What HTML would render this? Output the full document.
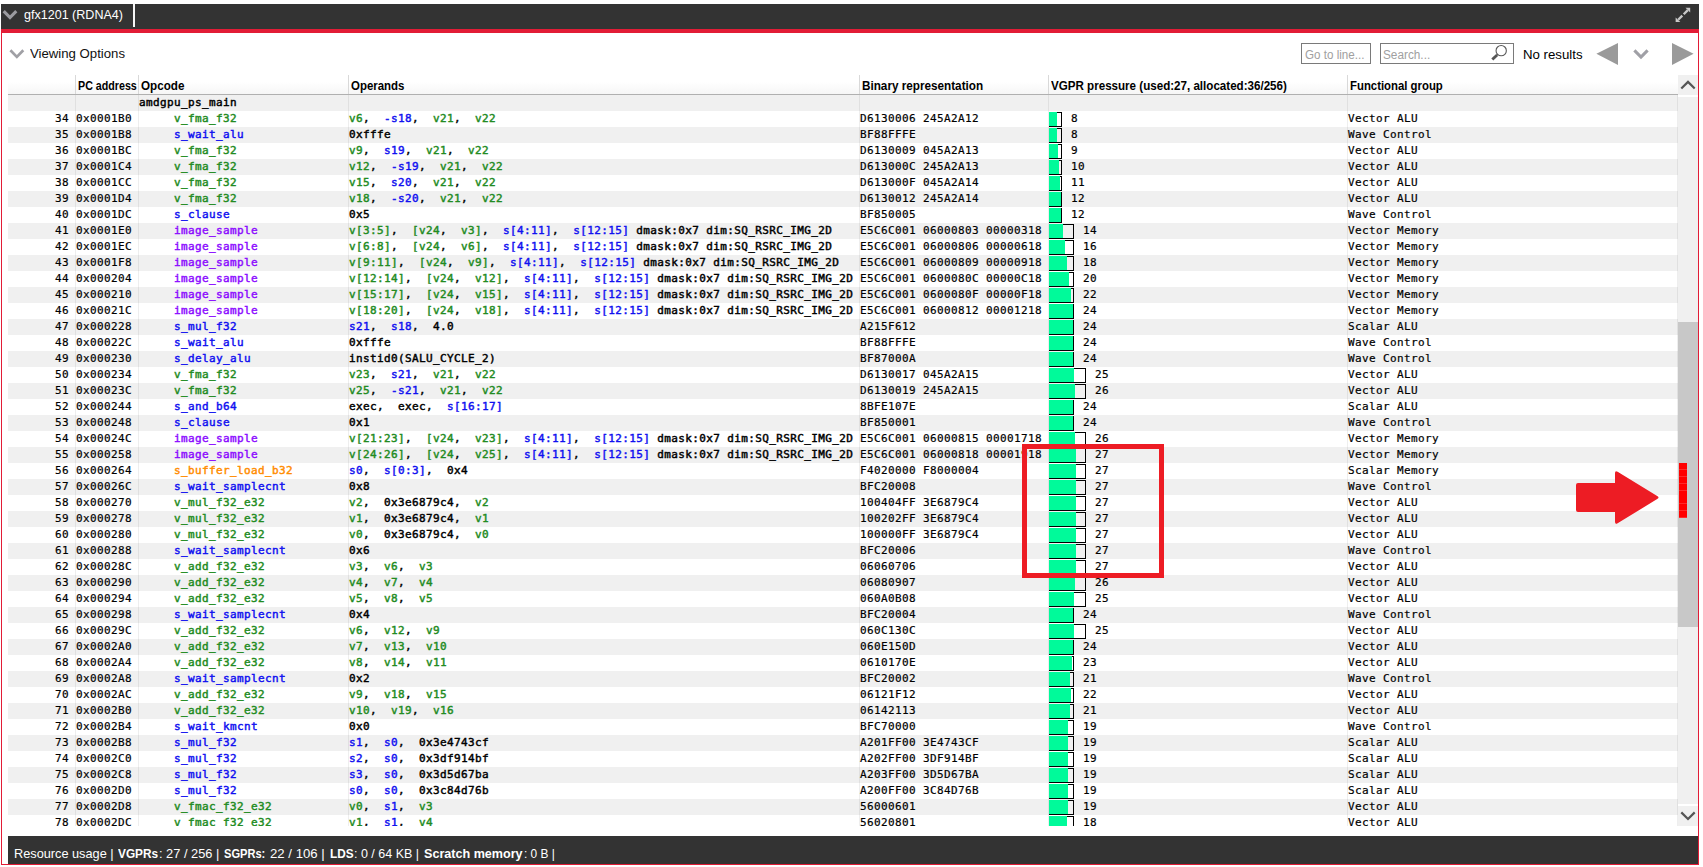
<!DOCTYPE html>
<html lang="en"><head><meta charset="utf-8"><title>gfx1201 (RDNA4) ISA view</title>
<style>
*{box-sizing:border-box}
html,body{margin:0;padding:0;background:#fff}
body{width:1703px;height:867px;position:relative;overflow:hidden;font-family:"Liberation Sans",sans-serif;color:#000}
.abs{position:absolute}
.ft{display:inline-block;height:18px;line-height:18px;white-space:pre;transform-origin:0 50%}
#frame{left:1px;top:4px;width:1698px;height:861px;border:1px solid #e21c36;border-top:none}
#title{left:1px;top:4px;width:1698px;height:25px;background:#333}
#stripe{left:1px;top:29px;width:1698px;height:4px;background:#e21c36}
#tabsep{left:133px;top:4px;width:2px;height:22.5px;background:#f6f6f6}
.inp{border:1px solid #7a7a7a;background:#fff;height:21px;top:43px}
#gotobox{left:1301px;width:70px}
#searchbox{left:1380px;width:134px}
#table{left:8px;top:75px;width:1670px;height:751px;overflow:hidden}
#hdr{left:0;top:0;width:1671px;height:20px;background:linear-gradient(#fff 0%,#fff 35%,#f6f6f6 100%);border-bottom:1px solid #b0b0b0}
.hs{top:0;width:1px;height:19px;background:#d9d9d9}
.r{left:0;width:1670px;height:16px;font-family:"DejaVu Sans Mono","Liberation Mono",monospace;font-size:11px;letter-spacing:0.3775px;line-height:16px;white-space:pre;-webkit-text-stroke-width:0.2px}
.r.a{background:#f0f0f0}
.c{position:absolute;top:0;height:16px;white-space:pre}
.bd{-webkit-text-stroke-width:0.45px}
.g{color:#228b22}
.b{color:#1010f0}
.m{color:#8c0cff}
.o{color:#ff8c00}
.vl{top:20px;width:1px;height:751px;background:rgba(0,0,0,0.065)}
.bar{position:absolute;left:1041px;top:1px;height:15px;border:1px solid #000}
.fill{position:absolute;left:1041px;top:1px;height:14px;background:#00fa9a}
#sb{left:1678px;top:75px;width:20px;height:751px;background:#fff}
</style></head>
<body>
<div class="abs" id="frame"></div>
<div class="abs" id="title"></div>
<div class="abs" id="stripe"></div>
<svg class="abs" style="left:0;top:4px" width="22" height="22" viewBox="0 0 22 22"><path d="M3.7 7.2 L10 13.6 L16.3 7.2" fill="none" stroke="#9b9ba0" stroke-width="3.1"/></svg>
<span class="abs ft" id="tabtxt" style="left:23.80px;top:5.50px;font-size:13px;font-weight:normal;color:#fff;transform:scaleX(0.9648)">gfx1201 (RDNA4)</span>
<div class="abs" id="tabsep"></div>
<svg class="abs" style="left:1674px;top:6px" width="18" height="18" viewBox="0 0 18 18"><path d="M4.2 13.7 L8.3 9.6 M9.7 8.2 L13.8 4.1" fill="none" stroke="#c8c8c8" stroke-width="2.3"/><path d="M11.5 1.85 L16.2 1.85 L16.2 6.55 Z M1.65 11.4 L1.65 16.1 L6.35 16.1 Z" fill="#c8c8c8"/></svg>
<svg class="abs" style="left:6px;top:44px" width="22" height="20" viewBox="0 0 22 20"><path d="M4.4 6.3 L10.85 12.9 L17.3 6.3" fill="none" stroke="#a0a0a5" stroke-width="2.7"/></svg>
<span class="abs ft" id="vo" style="left:30.00px;top:44.50px;font-size:13px;font-weight:normal;color:#111;transform:scaleX(1.0137)">Viewing Options</span>
<div class="abs inp" id="gotobox"></div>
<div class="abs inp" id="searchbox"></div>
<span class="abs ft" id="goto" style="left:1304.60px;top:46.04px;font-size:12px;font-weight:normal;color:#a0a0a0;transform:scaleX(0.9678)">Go to line...</span>
<span class="abs ft" id="search" style="left:1383.40px;top:46.04px;font-size:12px;font-weight:normal;color:#a0a0a0;transform:scaleX(0.9827)">Search...</span>
<svg class="abs" style="left:1488px;top:43px" width="24" height="21" viewBox="0 0 24 21"><circle cx="13.2" cy="7.65" r="5.15" fill="none" stroke="#5a5a5a" stroke-width="1.1"/><path d="M9.7 11.2 L8.6 12.4" stroke="#5a5a5a" stroke-width="1.2"/><path d="M9.1 12 L4.3 16.5" stroke="#555" stroke-width="2.9"/></svg>
<span class="abs ft" id="nores" style="left:1523.20px;top:46.10px;font-size:13px;font-weight:normal;color:#000;transform:scaleX(1.0183)">No results</span>
<svg class="abs" style="left:1594px;top:42px" width="104" height="24" viewBox="0 0 104 24"><path d="M2.4 11.7 L24 1 L24 23 Z" fill="#9a9a9a"/><path d="M78 1 L78 23 L99.6 11.7 Z" fill="#9a9a9a"/><path d="M40.4 8.4 L47 15 L53.6 8.4" fill="none" stroke="#a0a0a6" stroke-width="3.1"/></svg>
<div class="abs" id="table">
<div class="abs" id="hdr"></div>
<div class="abs hs" style="left:67px"></div><div class="abs hs" style="left:130px"></div><div class="abs hs" style="left:340px"></div><div class="abs hs" style="left:851px"></div><div class="abs hs" style="left:1040px"></div><div class="abs hs" style="left:1339px"></div>
<div class="abs r a" style="top:20px"><span class="c bd" style="left:131px">amdgpu_ps_main</span></div>
<div class="abs r" style="top:36px"><span class="c" style="right:1609px">34</span><span class="c" style="left:68px">0x0001B0</span><span class="c bd g" style="left:166px">v_fma_f32</span><span class="c bd" style="left:341px"><span class="g">v6</span>,  <span class="b">-s18</span>,  <span class="g">v21</span>,  <span class="g">v22</span></span><span class="c" style="left:852px">D6130006 245A2A12</span><i class="bar" style="width:13px"></i><i class="fill" style="width:8px"></i><span class="c" style="left:1063px">8</span><span class="c" style="left:1340px">Vector ALU</span></div>
<div class="abs r a" style="top:52px"><span class="c" style="right:1609px">35</span><span class="c" style="left:68px">0x0001B8</span><span class="c bd b" style="left:166px">s_wait_alu</span><span class="c bd" style="left:341px">0xfffe</span><span class="c" style="left:852px">BF88FFFE</span><i class="bar" style="width:13px"></i><i class="fill" style="width:8px"></i><span class="c" style="left:1063px">8</span><span class="c" style="left:1340px">Wave Control</span></div>
<div class="abs r" style="top:68px"><span class="c" style="right:1609px">36</span><span class="c" style="left:68px">0x0001BC</span><span class="c bd g" style="left:166px">v_fma_f32</span><span class="c bd" style="left:341px"><span class="g">v9</span>,  <span class="b">s19</span>,  <span class="g">v21</span>,  <span class="g">v22</span></span><span class="c" style="left:852px">D6130009 045A2A13</span><i class="bar" style="width:13px"></i><i class="fill" style="width:9px"></i><span class="c" style="left:1063px">9</span><span class="c" style="left:1340px">Vector ALU</span></div>
<div class="abs r a" style="top:84px"><span class="c" style="right:1609px">37</span><span class="c" style="left:68px">0x0001C4</span><span class="c bd g" style="left:166px">v_fma_f32</span><span class="c bd" style="left:341px"><span class="g">v12</span>,  <span class="b">-s19</span>,  <span class="g">v21</span>,  <span class="g">v22</span></span><span class="c" style="left:852px">D613000C 245A2A13</span><i class="bar" style="width:13px"></i><i class="fill" style="width:10px"></i><span class="c" style="left:1063px">10</span><span class="c" style="left:1340px">Vector ALU</span></div>
<div class="abs r" style="top:100px"><span class="c" style="right:1609px">38</span><span class="c" style="left:68px">0x0001CC</span><span class="c bd g" style="left:166px">v_fma_f32</span><span class="c bd" style="left:341px"><span class="g">v15</span>,  <span class="b">s20</span>,  <span class="g">v21</span>,  <span class="g">v22</span></span><span class="c" style="left:852px">D613000F 045A2A14</span><i class="bar" style="width:13px"></i><i class="fill" style="width:11px"></i><span class="c" style="left:1063px">11</span><span class="c" style="left:1340px">Vector ALU</span></div>
<div class="abs r a" style="top:116px"><span class="c" style="right:1609px">39</span><span class="c" style="left:68px">0x0001D4</span><span class="c bd g" style="left:166px">v_fma_f32</span><span class="c bd" style="left:341px"><span class="g">v18</span>,  <span class="b">-s20</span>,  <span class="g">v21</span>,  <span class="g">v22</span></span><span class="c" style="left:852px">D6130012 245A2A14</span><i class="bar" style="width:13px"></i><i class="fill" style="width:12px"></i><span class="c" style="left:1063px">12</span><span class="c" style="left:1340px">Vector ALU</span></div>
<div class="abs r" style="top:132px"><span class="c" style="right:1609px">40</span><span class="c" style="left:68px">0x0001DC</span><span class="c bd b" style="left:166px">s_clause</span><span class="c bd" style="left:341px">0x5</span><span class="c" style="left:852px">BF850005</span><i class="bar" style="width:13px"></i><i class="fill" style="width:12px"></i><span class="c" style="left:1063px">12</span><span class="c" style="left:1340px">Wave Control</span></div>
<div class="abs r a" style="top:148px"><span class="c" style="right:1609px">41</span><span class="c" style="left:68px">0x0001E0</span><span class="c bd m" style="left:166px">image_sample</span><span class="c bd" style="left:341px"><span class="g">v[3:5]</span>,  <span class="g">[v24</span>,  <span class="g">v3]</span>,  <span class="b">s[4:11]</span>,  <span class="b">s[12:15]</span> dmask:0x7 dim:SQ_RSRC_IMG_2D</span><span class="c" style="left:852px">E5C6C001 06000803 00000318</span><i class="bar" style="width:25px"></i><i class="fill" style="width:14px"></i><span class="c" style="left:1075px">14</span><span class="c" style="left:1340px">Vector Memory</span></div>
<div class="abs r" style="top:164px"><span class="c" style="right:1609px">42</span><span class="c" style="left:68px">0x0001EC</span><span class="c bd m" style="left:166px">image_sample</span><span class="c bd" style="left:341px"><span class="g">v[6:8]</span>,  <span class="g">[v24</span>,  <span class="g">v6]</span>,  <span class="b">s[4:11]</span>,  <span class="b">s[12:15]</span> dmask:0x7 dim:SQ_RSRC_IMG_2D</span><span class="c" style="left:852px">E5C6C001 06000806 00000618</span><i class="bar" style="width:25px"></i><i class="fill" style="width:16px"></i><span class="c" style="left:1075px">16</span><span class="c" style="left:1340px">Vector Memory</span></div>
<div class="abs r a" style="top:180px"><span class="c" style="right:1609px">43</span><span class="c" style="left:68px">0x0001F8</span><span class="c bd m" style="left:166px">image_sample</span><span class="c bd" style="left:341px"><span class="g">v[9:11]</span>,  <span class="g">[v24</span>,  <span class="g">v9]</span>,  <span class="b">s[4:11]</span>,  <span class="b">s[12:15]</span> dmask:0x7 dim:SQ_RSRC_IMG_2D</span><span class="c" style="left:852px">E5C6C001 06000809 00000918</span><i class="bar" style="width:25px"></i><i class="fill" style="width:18px"></i><span class="c" style="left:1075px">18</span><span class="c" style="left:1340px">Vector Memory</span></div>
<div class="abs r" style="top:196px"><span class="c" style="right:1609px">44</span><span class="c" style="left:68px">0x000204</span><span class="c bd m" style="left:166px">image_sample</span><span class="c bd" style="left:341px"><span class="g">v[12:14]</span>,  <span class="g">[v24</span>,  <span class="g">v12]</span>,  <span class="b">s[4:11]</span>,  <span class="b">s[12:15]</span> dmask:0x7 dim:SQ_RSRC_IMG_2D</span><span class="c" style="left:852px">E5C6C001 0600080C 00000C18</span><i class="bar" style="width:25px"></i><i class="fill" style="width:20px"></i><span class="c" style="left:1075px">20</span><span class="c" style="left:1340px">Vector Memory</span></div>
<div class="abs r a" style="top:212px"><span class="c" style="right:1609px">45</span><span class="c" style="left:68px">0x000210</span><span class="c bd m" style="left:166px">image_sample</span><span class="c bd" style="left:341px"><span class="g">v[15:17]</span>,  <span class="g">[v24</span>,  <span class="g">v15]</span>,  <span class="b">s[4:11]</span>,  <span class="b">s[12:15]</span> dmask:0x7 dim:SQ_RSRC_IMG_2D</span><span class="c" style="left:852px">E5C6C001 0600080F 00000F18</span><i class="bar" style="width:25px"></i><i class="fill" style="width:22px"></i><span class="c" style="left:1075px">22</span><span class="c" style="left:1340px">Vector Memory</span></div>
<div class="abs r" style="top:228px"><span class="c" style="right:1609px">46</span><span class="c" style="left:68px">0x00021C</span><span class="c bd m" style="left:166px">image_sample</span><span class="c bd" style="left:341px"><span class="g">v[18:20]</span>,  <span class="g">[v24</span>,  <span class="g">v18]</span>,  <span class="b">s[4:11]</span>,  <span class="b">s[12:15]</span> dmask:0x7 dim:SQ_RSRC_IMG_2D</span><span class="c" style="left:852px">E5C6C001 06000812 00001218</span><i class="bar" style="width:25px"></i><i class="fill" style="width:24px"></i><span class="c" style="left:1075px">24</span><span class="c" style="left:1340px">Vector Memory</span></div>
<div class="abs r a" style="top:244px"><span class="c" style="right:1609px">47</span><span class="c" style="left:68px">0x000228</span><span class="c bd b" style="left:166px">s_mul_f32</span><span class="c bd" style="left:341px"><span class="b">s21</span>,  <span class="b">s18</span>,  4.0</span><span class="c" style="left:852px">A215F612</span><i class="bar" style="width:25px"></i><i class="fill" style="width:24px"></i><span class="c" style="left:1075px">24</span><span class="c" style="left:1340px">Scalar ALU</span></div>
<div class="abs r" style="top:260px"><span class="c" style="right:1609px">48</span><span class="c" style="left:68px">0x00022C</span><span class="c bd b" style="left:166px">s_wait_alu</span><span class="c bd" style="left:341px">0xfffe</span><span class="c" style="left:852px">BF88FFFE</span><i class="bar" style="width:25px"></i><i class="fill" style="width:24px"></i><span class="c" style="left:1075px">24</span><span class="c" style="left:1340px">Wave Control</span></div>
<div class="abs r a" style="top:276px"><span class="c" style="right:1609px">49</span><span class="c" style="left:68px">0x000230</span><span class="c bd b" style="left:166px">s_delay_alu</span><span class="c bd" style="left:341px">instid0(SALU_CYCLE_2)</span><span class="c" style="left:852px">BF87000A</span><i class="bar" style="width:25px"></i><i class="fill" style="width:24px"></i><span class="c" style="left:1075px">24</span><span class="c" style="left:1340px">Wave Control</span></div>
<div class="abs r" style="top:292px"><span class="c" style="right:1609px">50</span><span class="c" style="left:68px">0x000234</span><span class="c bd g" style="left:166px">v_fma_f32</span><span class="c bd" style="left:341px"><span class="g">v23</span>,  <span class="b">s21</span>,  <span class="g">v21</span>,  <span class="g">v22</span></span><span class="c" style="left:852px">D6130017 045A2A15</span><i class="bar" style="width:37px"></i><i class="fill" style="width:25px"></i><span class="c" style="left:1087px">25</span><span class="c" style="left:1340px">Vector ALU</span></div>
<div class="abs r a" style="top:308px"><span class="c" style="right:1609px">51</span><span class="c" style="left:68px">0x00023C</span><span class="c bd g" style="left:166px">v_fma_f32</span><span class="c bd" style="left:341px"><span class="g">v25</span>,  <span class="b">-s21</span>,  <span class="g">v21</span>,  <span class="g">v22</span></span><span class="c" style="left:852px">D6130019 245A2A15</span><i class="bar" style="width:37px"></i><i class="fill" style="width:26px"></i><span class="c" style="left:1087px">26</span><span class="c" style="left:1340px">Vector ALU</span></div>
<div class="abs r" style="top:324px"><span class="c" style="right:1609px">52</span><span class="c" style="left:68px">0x000244</span><span class="c bd b" style="left:166px">s_and_b64</span><span class="c bd" style="left:341px">exec,  exec,  <span class="b">s[16:17]</span></span><span class="c" style="left:852px">8BFE107E</span><i class="bar" style="width:25px"></i><i class="fill" style="width:24px"></i><span class="c" style="left:1075px">24</span><span class="c" style="left:1340px">Scalar ALU</span></div>
<div class="abs r a" style="top:340px"><span class="c" style="right:1609px">53</span><span class="c" style="left:68px">0x000248</span><span class="c bd b" style="left:166px">s_clause</span><span class="c bd" style="left:341px">0x1</span><span class="c" style="left:852px">BF850001</span><i class="bar" style="width:25px"></i><i class="fill" style="width:24px"></i><span class="c" style="left:1075px">24</span><span class="c" style="left:1340px">Wave Control</span></div>
<div class="abs r" style="top:356px"><span class="c" style="right:1609px">54</span><span class="c" style="left:68px">0x00024C</span><span class="c bd m" style="left:166px">image_sample</span><span class="c bd" style="left:341px"><span class="g">v[21:23]</span>,  <span class="g">[v24</span>,  <span class="g">v23]</span>,  <span class="b">s[4:11]</span>,  <span class="b">s[12:15]</span> dmask:0x7 dim:SQ_RSRC_IMG_2D</span><span class="c" style="left:852px">E5C6C001 06000815 00001718</span><i class="bar" style="width:37px"></i><i class="fill" style="width:26px"></i><span class="c" style="left:1087px">26</span><span class="c" style="left:1340px">Vector Memory</span></div>
<div class="abs r a" style="top:372px"><span class="c" style="right:1609px">55</span><span class="c" style="left:68px">0x000258</span><span class="c bd m" style="left:166px">image_sample</span><span class="c bd" style="left:341px"><span class="g">v[24:26]</span>,  <span class="g">[v24</span>,  <span class="g">v25]</span>,  <span class="b">s[4:11]</span>,  <span class="b">s[12:15]</span> dmask:0x7 dim:SQ_RSRC_IMG_2D</span><span class="c" style="left:852px">E5C6C001 06000818 00001918</span><i class="bar" style="width:37px"></i><i class="fill" style="width:27px"></i><span class="c" style="left:1087px">27</span><span class="c" style="left:1340px">Vector Memory</span></div>
<div class="abs r" style="top:388px"><span class="c" style="right:1609px">56</span><span class="c" style="left:68px">0x000264</span><span class="c bd o" style="left:166px">s_buffer_load_b32</span><span class="c bd" style="left:341px"><span class="b">s0</span>,  <span class="b">s[0:3]</span>,  0x4</span><span class="c" style="left:852px">F4020000 F8000004</span><i class="bar" style="width:37px"></i><i class="fill" style="width:27px"></i><span class="c" style="left:1087px">27</span><span class="c" style="left:1340px">Scalar Memory</span></div>
<div class="abs r a" style="top:404px"><span class="c" style="right:1609px">57</span><span class="c" style="left:68px">0x00026C</span><span class="c bd b" style="left:166px">s_wait_samplecnt</span><span class="c bd" style="left:341px">0x8</span><span class="c" style="left:852px">BFC20008</span><i class="bar" style="width:37px"></i><i class="fill" style="width:27px"></i><span class="c" style="left:1087px">27</span><span class="c" style="left:1340px">Wave Control</span></div>
<div class="abs r" style="top:420px"><span class="c" style="right:1609px">58</span><span class="c" style="left:68px">0x000270</span><span class="c bd g" style="left:166px">v_mul_f32_e32</span><span class="c bd" style="left:341px"><span class="g">v2</span>,  0x3e6879c4,  <span class="g">v2</span></span><span class="c" style="left:852px">100404FF 3E6879C4</span><i class="bar" style="width:37px"></i><i class="fill" style="width:27px"></i><span class="c" style="left:1087px">27</span><span class="c" style="left:1340px">Vector ALU</span></div>
<div class="abs r a" style="top:436px"><span class="c" style="right:1609px">59</span><span class="c" style="left:68px">0x000278</span><span class="c bd g" style="left:166px">v_mul_f32_e32</span><span class="c bd" style="left:341px"><span class="g">v1</span>,  0x3e6879c4,  <span class="g">v1</span></span><span class="c" style="left:852px">100202FF 3E6879C4</span><i class="bar" style="width:37px"></i><i class="fill" style="width:27px"></i><span class="c" style="left:1087px">27</span><span class="c" style="left:1340px">Vector ALU</span></div>
<div class="abs r" style="top:452px"><span class="c" style="right:1609px">60</span><span class="c" style="left:68px">0x000280</span><span class="c bd g" style="left:166px">v_mul_f32_e32</span><span class="c bd" style="left:341px"><span class="g">v0</span>,  0x3e6879c4,  <span class="g">v0</span></span><span class="c" style="left:852px">100000FF 3E6879C4</span><i class="bar" style="width:37px"></i><i class="fill" style="width:27px"></i><span class="c" style="left:1087px">27</span><span class="c" style="left:1340px">Vector ALU</span></div>
<div class="abs r a" style="top:468px"><span class="c" style="right:1609px">61</span><span class="c" style="left:68px">0x000288</span><span class="c bd b" style="left:166px">s_wait_samplecnt</span><span class="c bd" style="left:341px">0x6</span><span class="c" style="left:852px">BFC20006</span><i class="bar" style="width:37px"></i><i class="fill" style="width:27px"></i><span class="c" style="left:1087px">27</span><span class="c" style="left:1340px">Wave Control</span></div>
<div class="abs r" style="top:484px"><span class="c" style="right:1609px">62</span><span class="c" style="left:68px">0x00028C</span><span class="c bd g" style="left:166px">v_add_f32_e32</span><span class="c bd" style="left:341px"><span class="g">v3</span>,  <span class="g">v6</span>,  <span class="g">v3</span></span><span class="c" style="left:852px">06060706</span><i class="bar" style="width:37px"></i><i class="fill" style="width:27px"></i><span class="c" style="left:1087px">27</span><span class="c" style="left:1340px">Vector ALU</span></div>
<div class="abs r a" style="top:500px"><span class="c" style="right:1609px">63</span><span class="c" style="left:68px">0x000290</span><span class="c bd g" style="left:166px">v_add_f32_e32</span><span class="c bd" style="left:341px"><span class="g">v4</span>,  <span class="g">v7</span>,  <span class="g">v4</span></span><span class="c" style="left:852px">06080907</span><i class="bar" style="width:37px"></i><i class="fill" style="width:26px"></i><span class="c" style="left:1087px">26</span><span class="c" style="left:1340px">Vector ALU</span></div>
<div class="abs r" style="top:516px"><span class="c" style="right:1609px">64</span><span class="c" style="left:68px">0x000294</span><span class="c bd g" style="left:166px">v_add_f32_e32</span><span class="c bd" style="left:341px"><span class="g">v5</span>,  <span class="g">v8</span>,  <span class="g">v5</span></span><span class="c" style="left:852px">060A0B08</span><i class="bar" style="width:37px"></i><i class="fill" style="width:25px"></i><span class="c" style="left:1087px">25</span><span class="c" style="left:1340px">Vector ALU</span></div>
<div class="abs r a" style="top:532px"><span class="c" style="right:1609px">65</span><span class="c" style="left:68px">0x000298</span><span class="c bd b" style="left:166px">s_wait_samplecnt</span><span class="c bd" style="left:341px">0x4</span><span class="c" style="left:852px">BFC20004</span><i class="bar" style="width:25px"></i><i class="fill" style="width:24px"></i><span class="c" style="left:1075px">24</span><span class="c" style="left:1340px">Wave Control</span></div>
<div class="abs r" style="top:548px"><span class="c" style="right:1609px">66</span><span class="c" style="left:68px">0x00029C</span><span class="c bd g" style="left:166px">v_add_f32_e32</span><span class="c bd" style="left:341px"><span class="g">v6</span>,  <span class="g">v12</span>,  <span class="g">v9</span></span><span class="c" style="left:852px">060C130C</span><i class="bar" style="width:37px"></i><i class="fill" style="width:25px"></i><span class="c" style="left:1087px">25</span><span class="c" style="left:1340px">Vector ALU</span></div>
<div class="abs r a" style="top:564px"><span class="c" style="right:1609px">67</span><span class="c" style="left:68px">0x0002A0</span><span class="c bd g" style="left:166px">v_add_f32_e32</span><span class="c bd" style="left:341px"><span class="g">v7</span>,  <span class="g">v13</span>,  <span class="g">v10</span></span><span class="c" style="left:852px">060E150D</span><i class="bar" style="width:25px"></i><i class="fill" style="width:24px"></i><span class="c" style="left:1075px">24</span><span class="c" style="left:1340px">Vector ALU</span></div>
<div class="abs r" style="top:580px"><span class="c" style="right:1609px">68</span><span class="c" style="left:68px">0x0002A4</span><span class="c bd g" style="left:166px">v_add_f32_e32</span><span class="c bd" style="left:341px"><span class="g">v8</span>,  <span class="g">v14</span>,  <span class="g">v11</span></span><span class="c" style="left:852px">0610170E</span><i class="bar" style="width:25px"></i><i class="fill" style="width:23px"></i><span class="c" style="left:1075px">23</span><span class="c" style="left:1340px">Vector ALU</span></div>
<div class="abs r a" style="top:596px"><span class="c" style="right:1609px">69</span><span class="c" style="left:68px">0x0002A8</span><span class="c bd b" style="left:166px">s_wait_samplecnt</span><span class="c bd" style="left:341px">0x2</span><span class="c" style="left:852px">BFC20002</span><i class="bar" style="width:25px"></i><i class="fill" style="width:21px"></i><span class="c" style="left:1075px">21</span><span class="c" style="left:1340px">Wave Control</span></div>
<div class="abs r" style="top:612px"><span class="c" style="right:1609px">70</span><span class="c" style="left:68px">0x0002AC</span><span class="c bd g" style="left:166px">v_add_f32_e32</span><span class="c bd" style="left:341px"><span class="g">v9</span>,  <span class="g">v18</span>,  <span class="g">v15</span></span><span class="c" style="left:852px">06121F12</span><i class="bar" style="width:25px"></i><i class="fill" style="width:22px"></i><span class="c" style="left:1075px">22</span><span class="c" style="left:1340px">Vector ALU</span></div>
<div class="abs r a" style="top:628px"><span class="c" style="right:1609px">71</span><span class="c" style="left:68px">0x0002B0</span><span class="c bd g" style="left:166px">v_add_f32_e32</span><span class="c bd" style="left:341px"><span class="g">v10</span>,  <span class="g">v19</span>,  <span class="g">v16</span></span><span class="c" style="left:852px">06142113</span><i class="bar" style="width:25px"></i><i class="fill" style="width:21px"></i><span class="c" style="left:1075px">21</span><span class="c" style="left:1340px">Vector ALU</span></div>
<div class="abs r" style="top:644px"><span class="c" style="right:1609px">72</span><span class="c" style="left:68px">0x0002B4</span><span class="c bd b" style="left:166px">s_wait_kmcnt</span><span class="c bd" style="left:341px">0x0</span><span class="c" style="left:852px">BFC70000</span><i class="bar" style="width:25px"></i><i class="fill" style="width:19px"></i><span class="c" style="left:1075px">19</span><span class="c" style="left:1340px">Wave Control</span></div>
<div class="abs r a" style="top:660px"><span class="c" style="right:1609px">73</span><span class="c" style="left:68px">0x0002B8</span><span class="c bd b" style="left:166px">s_mul_f32</span><span class="c bd" style="left:341px"><span class="b">s1</span>,  <span class="b">s0</span>,  0x3e4743cf</span><span class="c" style="left:852px">A201FF00 3E4743CF</span><i class="bar" style="width:25px"></i><i class="fill" style="width:19px"></i><span class="c" style="left:1075px">19</span><span class="c" style="left:1340px">Scalar ALU</span></div>
<div class="abs r" style="top:676px"><span class="c" style="right:1609px">74</span><span class="c" style="left:68px">0x0002C0</span><span class="c bd b" style="left:166px">s_mul_f32</span><span class="c bd" style="left:341px"><span class="b">s2</span>,  <span class="b">s0</span>,  0x3df914bf</span><span class="c" style="left:852px">A202FF00 3DF914BF</span><i class="bar" style="width:25px"></i><i class="fill" style="width:19px"></i><span class="c" style="left:1075px">19</span><span class="c" style="left:1340px">Scalar ALU</span></div>
<div class="abs r a" style="top:692px"><span class="c" style="right:1609px">75</span><span class="c" style="left:68px">0x0002C8</span><span class="c bd b" style="left:166px">s_mul_f32</span><span class="c bd" style="left:341px"><span class="b">s3</span>,  <span class="b">s0</span>,  0x3d5d67ba</span><span class="c" style="left:852px">A203FF00 3D5D67BA</span><i class="bar" style="width:25px"></i><i class="fill" style="width:19px"></i><span class="c" style="left:1075px">19</span><span class="c" style="left:1340px">Scalar ALU</span></div>
<div class="abs r" style="top:708px"><span class="c" style="right:1609px">76</span><span class="c" style="left:68px">0x0002D0</span><span class="c bd b" style="left:166px">s_mul_f32</span><span class="c bd" style="left:341px"><span class="b">s0</span>,  <span class="b">s0</span>,  0x3c84d76b</span><span class="c" style="left:852px">A200FF00 3C84D76B</span><i class="bar" style="width:25px"></i><i class="fill" style="width:19px"></i><span class="c" style="left:1075px">19</span><span class="c" style="left:1340px">Scalar ALU</span></div>
<div class="abs r a" style="top:724px"><span class="c" style="right:1609px">77</span><span class="c" style="left:68px">0x0002D8</span><span class="c bd g" style="left:166px">v_fmac_f32_e32</span><span class="c bd" style="left:341px"><span class="g">v0</span>,  <span class="b">s1</span>,  <span class="g">v3</span></span><span class="c" style="left:852px">56000601</span><i class="bar" style="width:25px"></i><i class="fill" style="width:19px"></i><span class="c" style="left:1075px">19</span><span class="c" style="left:1340px">Vector ALU</span></div>
<div class="abs r" style="top:740px"><span class="c" style="right:1609px">78</span><span class="c" style="left:68px">0x0002DC</span><span class="c bd g" style="left:166px">v_fmac_f32_e32</span><span class="c bd" style="left:341px"><span class="g">v1</span>,  <span class="b">s1</span>,  <span class="g">v4</span></span><span class="c" style="left:852px">56020801</span><i class="bar" style="width:25px"></i><i class="fill" style="width:18px"></i><span class="c" style="left:1075px">18</span><span class="c" style="left:1340px">Vector ALU</span></div>
<div class="abs vl" style="left:67px"></div><div class="abs vl" style="left:130px"></div><div class="abs vl" style="left:340px"></div><div class="abs vl" style="left:851px"></div><div class="abs vl" style="left:1040px"></div><div class="abs vl" style="left:1339px"></div><div class="abs vl" style="left:1669px"></div>
</div>
<span class="abs ft" id="h1" style="left:78.40px;top:76.74px;font-size:12.3px;font-weight:bold;color:#000;transform:scaleX(0.8689)">PC address</span>
<span class="abs ft" id="h2" style="left:140.90px;top:76.74px;font-size:12.3px;font-weight:bold;color:#000;transform:scaleX(0.9480)">Opcode</span>
<span class="abs ft" id="h3" style="left:351.00px;top:76.74px;font-size:12.3px;font-weight:bold;color:#000;transform:scaleX(0.9302)">Operands</span>
<span class="abs ft" id="h4" style="left:862.10px;top:76.74px;font-size:12.3px;font-weight:bold;color:#000;transform:scaleX(0.9527)">Binary representation</span>
<span class="abs ft" id="h5" style="left:1050.90px;top:76.74px;font-size:12.3px;font-weight:bold;color:#000;transform:scaleX(0.9430)">VGPR pressure (used:27, allocated:36/256)</span>
<span class="abs ft" id="h6" style="left:1350.30px;top:76.74px;font-size:12.3px;font-weight:bold;color:#000;transform:scaleX(0.9241)">Functional group</span>
<div class="abs" id="sb"><div class="abs" style="left:0;top:0;width:20px;height:20px;background:#f0f0f0"></div><div class="abs" style="left:0;top:22px;width:20px;height:707px;background:#f0f0f0"></div><div class="abs" style="left:0;top:731px;width:20px;height:20px;background:#f0f0f0"></div><div class="abs" style="left:0;top:247px;width:20px;height:305px;background:#c8c8c8"></div><div class="abs" style="left:1px;top:388px;width:8px;height:55px;background:repeating-linear-gradient(#ff0000 0,#ff0000 6px,#ff2a2a 6px,#ff2a2a 6.875px)"></div><svg class="abs" style="left:0;top:0" width="20" height="20" viewBox="0 0 20 20"><path d="M3.3 13.5 L10 6.9 L16.7 13.5" fill="none" stroke="#555" stroke-width="2.2"/></svg><svg class="abs" style="left:0;top:731px" width="20" height="20" viewBox="0 0 20 20"><path d="M3.3 6.4 L10 13 L16.7 6.4" fill="none" stroke="#555" stroke-width="2.2"/></svg></div>
<div class="abs" id="status" style="left:8px;top:836px;width:1690px;height:28px;background:#333"></div>
<span class="abs ft" id="s1" style="left:14.00px;top:845.20px;font-size:13px;font-weight:normal;color:#fff;transform:scaleX(0.9796)">Resource usage |</span>
<span class="abs ft" id="s2" style="left:118.30px;top:845.20px;font-size:13px;font-weight:bold;color:#fff;transform:scaleX(0.9097)">VGPRs</span>
<span class="abs ft" id="s3" style="left:159.00px;top:845.20px;font-size:13px;font-weight:normal;color:#fff;transform:scaleX(0.9852)">: 27 / 256 |</span>
<span class="abs ft" id="s4" style="left:223.90px;top:845.20px;font-size:13px;font-weight:bold;color:#fff;transform:scaleX(0.8532)">SGPRs:</span>
<span class="abs ft" id="s5" style="left:270.00px;top:845.20px;font-size:13px;font-weight:normal;color:#fff;transform:scaleX(1.0133)">22 / 106 |</span>
<span class="abs ft" id="s6" style="left:329.50px;top:845.20px;font-size:13px;font-weight:bold;color:#fff;transform:scaleX(0.9077)">LDS</span>
<span class="abs ft" id="s7" style="left:354.00px;top:845.20px;font-size:13px;font-weight:normal;color:#fff;transform:scaleX(0.9616)">: 0 / 64 KB |</span>
<span class="abs ft" id="s8" style="left:424.10px;top:845.20px;font-size:13px;font-weight:bold;color:#fff;transform:scaleX(0.9677)">Scratch memory</span>
<span class="abs ft" id="s9" style="left:524.00px;top:845.20px;font-size:13px;font-weight:normal;color:#fff;transform:scaleX(0.9130)">: 0 B |</span>
<div class="abs" id="redbox" style="left:1022px;top:444px;width:142px;height:134px;border:5px solid #ed1c24"></div>
<svg class="abs" style="left:1574px;top:468px" width="88" height="60" viewBox="0 0 88 60"><path d="M4 15 L41 15 L41 5.2 Q41 2.2 43.6 3.75 L83.2 27.9 Q85.9 29.5 83.2 31.1 L43.6 55.25 Q41 56.8 41 53.8 L41 44 L4 44 Q2 44 2 42 L2 17 Q2 15 4 15 Z" fill="#ed1c24"/></svg>
</body></html>
